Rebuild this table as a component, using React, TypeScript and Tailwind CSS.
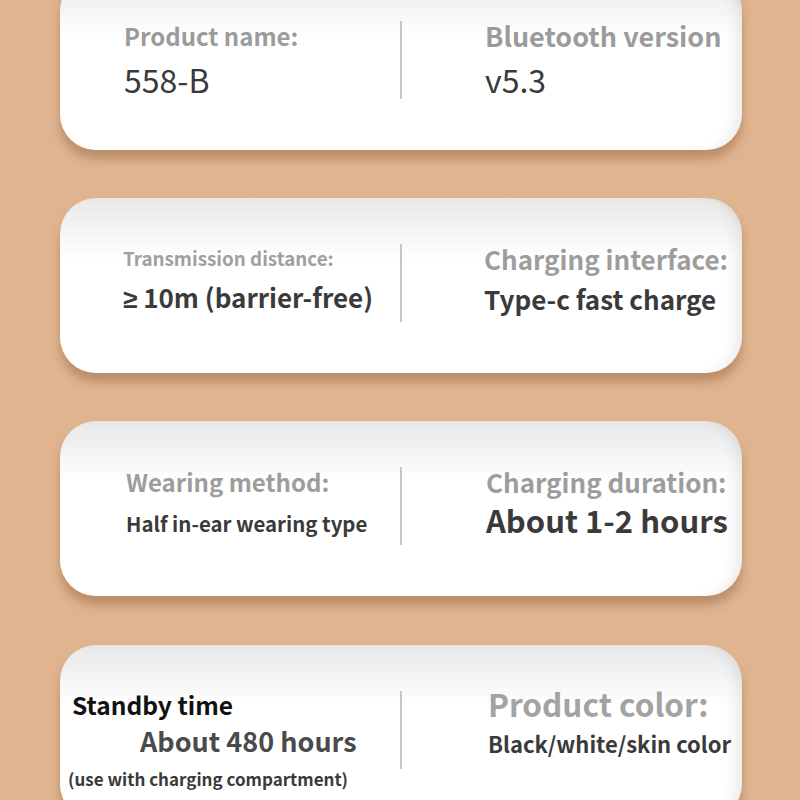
const font = { fontFamily: '"Noto Sans CJK SC", "Noto Sans", sans-serif' };

function Card({ left, right, className = '' }: { left: React.ReactNode; right: React.ReactNode; className?: string }) {
  return (
    <div
      className={`ml-[60px] w-[682px] h-[175px] shrink-0 rounded-[36px] bg-gradient-to-b from-[#e8e8e9] via-white via-[35%] to-white shadow-[0_9px_10px_rgba(120,72,35,0.35),inset_-14px_0_16px_-10px_rgba(0,0,0,0.10)] flex items-start pt-[46px] ${className}`}
    >
      <div className="w-[340px] h-[100px] relative">{left}</div>
      <div className="w-[2px] h-[78px] bg-[#c6c6c6]" />
      <div className="flex-1 h-[100px] relative">{right}</div>
    </div>
  );
}

export default function App() {
  return (
    <div className="w-[800px] h-[800px] overflow-hidden bg-[#e0b48f]" style={font}>
      <div className="flex flex-col gap-[48px] mt-[-25px]">
        <Card
          left={
            <div className="pl-[64px]">
              <div className="text-[24px] leading-[30px] font-bold text-[#9b9b9b]">Product name:</div>
              <div className="mt-[8px] text-[32px] leading-[40px] font-normal text-[#3a3a3a]">558-B</div>
            </div>
          }
          right={
            <div className="pl-[83px]">
              <div className="text-[27px] leading-[30px] font-bold text-[#9b9b9b]">Bluetooth version</div>
              <div className="mt-[8px] text-[32px] leading-[40px] font-normal text-[#3a3a3a]">v5.3</div>
            </div>
          }
        />
        <Card
          left={
            <div className="pl-[63px] pt-[2px]">
              <div className="text-[18.8px] leading-[24px] font-bold text-[#a0a0a0]">Transmission distance:</div>
              <div className="mt-[11px] text-[26px] leading-[32px] font-bold text-[#3a3a3a]">
                <span style={{ fontFamily: '"Noto Sans", sans-serif' }}>≥</span> 10m (barrier-free)
              </div>
            </div>
          }
          right={
            <div className="pl-[82px]">
              <div className="text-[26px] leading-[30px] font-bold text-[#9d9d9d]">Charging interface:</div>
              <div className="mt-[9px] text-[26px] leading-[32px] font-bold text-[#3a3a3a]">Type-c fast charge</div>
            </div>
          }
        />
        <Card
          left={
            <div className="pl-[66px]">
              <div className="text-[24px] leading-[30px] font-bold text-[#9d9d9d]">Wearing method:</div>
              <div className="mt-[13px] text-[20.4px] leading-[26px] font-bold text-[#3a3a3a]">Half in-ear wearing type</div>
            </div>
          }
          right={
            <div className="pl-[84px]">
              <div className="text-[26px] leading-[30px] font-bold text-[#9d9d9d]">Charging duration:</div>
              <div className="mt-[4px] text-[31px] leading-[38px] font-bold text-[#3a3a3a]">About 1-2 hours</div>
            </div>
          }
        />
        <Card
          className="mt-[1px]"
          left={
            <div>
              <div className="ml-[12px] text-[24.5px] leading-[28px] font-bold text-[#111]">Standby time</div>
              <div className="ml-[80px] mt-[5px] text-[27px] leading-[34px] font-bold text-[#4a4a4a]">About 480 hours</div>
              <div className="ml-[8px] mt-[10px] text-[17px] leading-[22px] font-bold text-[#3a3a3a]">(use with charging compartment)</div>
            </div>
          }
          right={
            <div className="pl-[86px] -mt-[5px]">
              <div className="text-[31.5px] leading-[34px] font-bold text-[#a3a3a3]">Product color:</div>
              <div className="mt-[9px] text-[22px] leading-[28px] font-bold text-[#3a3a3a]">Black/white/skin color</div>
            </div>
          }
        />
      </div>
    </div>
  );
}
